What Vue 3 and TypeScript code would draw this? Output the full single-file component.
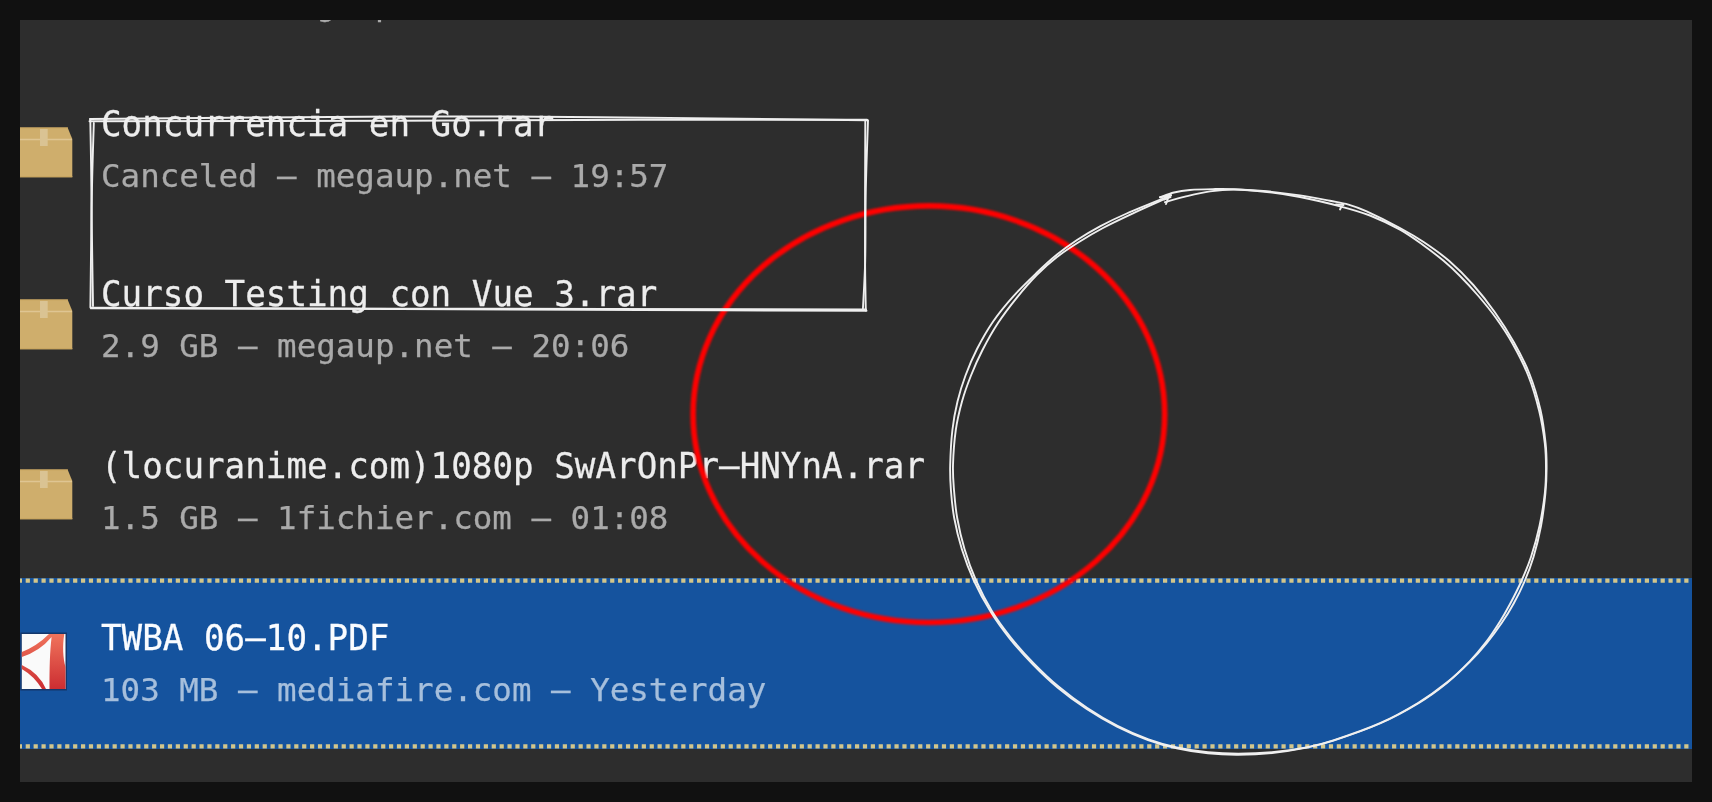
<script setup lang="ts">
type Point = [number, number]

interface Download {
  name: string
  detail: string
  kind: 'archive' | 'pdf'
  cls: string
}

const downloads: Download[] = [
  { name: '', detail: '2.9 GB — megaup.net', kind: 'archive', cls: 'clipped' },
  { name: 'Concurrencia en Go.rar', detail: 'Canceled — megaup.net — 19:57', kind: 'archive', cls: 'first' },
  { name: 'Curso Testing con Vue 3.rar', detail: '2.9 GB — megaup.net — 20:06', kind: 'archive', cls: 'second' },
  { name: '(locuranime.com)1080p SwArOnPr–HNYnA.rar', detail: '1.5 GB — 1fichier.com — 01:08', kind: 'archive', cls: 'third' },
  { name: 'TWBA 06–10.PDF', detail: '103 MB — mediafire.com — Yesterday', kind: 'pdf', cls: 'selected' },
]

// Smooth path through the given points (Catmull-Rom converted to Béziers).
function smooth(pts: Point[]): string {
  let d = `M${pts[0][0]} ${pts[0][1]}`
  for (let i = 0; i < pts.length - 1; i++) {
    const p0 = pts[Math.max(i - 1, 0)]
    const p1 = pts[i]
    const p2 = pts[i + 1]
    const p3 = pts[Math.min(i + 2, pts.length - 1)]
    const c1 = [p1[0] + (p2[0] - p0[0]) / 6, p1[1] + (p2[1] - p0[1]) / 6]
    const c2 = [p2[0] - (p3[0] - p1[0]) / 6, p2[1] - (p3[1] - p1[1]) / 6]
    d += `C${c1[0].toFixed(2)} ${c1[1].toFixed(2)} ${c2[0].toFixed(2)} ${c2[1].toFixed(2)} ${p2[0]} ${p2[1]}`
  }
  return d
}

const strokes: string[] = [
  // box
  smooth([[90, 119], [400, 116.5], [600, 117.2], [867.5, 120.3]]),
  smooth([[89.5, 121.3], [400, 120.8], [640, 119.8], [867, 119.8]]),
  smooth([[865.3, 120], [865, 250], [865.8, 310.5]]),
  smooth([[868, 120.5], [865.8, 190], [865.2, 260], [862.9, 309.5]]),
  smooth([[91, 308.4], [400, 309], [640, 310], [866.5, 310.8]]),
  smooth([[91, 307.8], [400, 308.6], [866, 309.4]]),
  smooth([[90.3, 119], [91.4, 200], [90.4, 307.5]]),
  smooth([[93.8, 123], [91.8, 205], [93, 306]]),
  // circle, outer pass
  smooth([
    [1160, 197.3], [1174, 192.5], [1190, 190], [1213, 189.1], [1233, 189.2], [1267, 191.3],
    [1300, 195.4], [1330, 200.8], [1348.5, 204.6], [1366.7, 211.4], [1400, 228],
    [1424, 242.3], [1449, 260.8], [1473.3, 285], [1495, 312.5], [1514, 342.5], [1529.5, 374],
    [1540.5, 410], [1545.6, 443.3], [1546.6, 468], [1545.4, 493.3], [1541, 526],
    [1533.5, 557], [1524.3, 582], [1513.7, 603.5], [1502, 622.5], [1486.9, 642.8],
    [1470, 661.7], [1446.9, 683], [1418.5, 703.2], [1380, 723.5], [1333.5, 740.6],
    [1306.7, 747.6], [1272, 753], [1238.3, 754.8], [1208, 753.4], [1176.7, 748.3],
    [1148, 740], [1117, 726.6], [1086.7, 709], [1057.5, 687.4], [1033, 664.5],
    [1010, 638.8], [991, 612.3], [973.8, 580.5], [961.8, 549], [954.2, 518],
    [950.9, 490], [950.2, 465], [952.4, 430], [957.5, 401.5], [965.5, 375.5], [977, 349],
    [993.3, 321.2], [1013.3, 296.3], [1036.7, 272.8], [1056.7, 254.8], [1077, 240],
    [1100, 226.3], [1126.7, 213.5], [1171, 195.3],
  ]),
  // circle, inner pass
  smooth([
    [1165, 202.2], [1185, 196.7], [1210, 191.4], [1235, 189.5], [1267, 192], [1300, 197],
    [1340, 206.3], [1370, 215.5], [1400, 229.7], [1423, 245],
    [1443.3, 260.6], [1460, 276], [1478, 295.5], [1496, 318], [1512.5, 343.5], [1528.2, 375.5],
    [1539.2, 411], [1544.8, 443.3], [1546, 468], [1544.8, 493.3], [1539.5, 526],
    [1531, 557], [1521, 582], [1510.3, 603.5], [1500, 621.5], [1486, 642.2],
    [1469.7, 661.3], [1446.5, 682.8], [1418, 703], [1380, 723.2], [1333.3, 740.4],
    [1306.5, 747.4], [1272, 752.3], [1238.3, 753.8], [1208, 752.3], [1176.8, 747.4],
    [1148.5, 739.3], [1117.5, 725.8], [1087.3, 708], [1058.5, 686.5], [1034, 663.6],
    [1011, 637.8], [992.3, 611.8], [975.8, 580], [964.5, 549], [957.2, 518], [954, 490],
    [953, 465], [955.8, 430], [962, 401.5], [971, 375.5], [982.5, 350], [998, 323],
    [1016.7, 297.8], [1036.7, 275], [1057, 257], [1079, 242], [1103, 228],
    [1133, 213.4], [1166, 198.5],
  ]),
  // pen lifts
  'M1160 197.3L1171 195.3L1164 199.5L1170.5 197M1168 198.5L1166 204',
  'M1336 204.5L1343.5 205M1342.5 204.5L1340 209.5',
]
</script>

<template>
  <main class="stage">
    <section class="shot">
      <div class="list">
        <article v-for="(item, i) in downloads" :key="i" class="row" :class="item.cls">
          <div class="icon">
            <svg v-if="item.kind === 'archive'" width="53" height="51" viewBox="0 0 53 51">
              <path d="M-2 .6H47.6L52.3 12V50.3H-2Z" fill="#cfae6c" />
              <path d="M-2 1H48" stroke="#c9a661" stroke-width="1.2" />
              <path d="M-2 49.7H52.3" stroke="#c9a661" stroke-width="1.2" />
              <path d="M-2 12.4H52" stroke="#dfc592" stroke-width="1.5" />
              <path d="M20 2H27.7V19H20Z" fill="#dac393" />
            </svg>
            <svg v-else width="48" height="60" viewBox="0 0 48 60">
              <defs>
                <linearGradient id="pdfRed" gradientUnits="userSpaceOnUse" x1="0" y1="2" x2="0" y2="58">
                  <stop offset="0" stop-color="#f0745c" />
                  <stop offset="1" stop-color="#cb2c31" />
                </linearGradient>
              </defs>
              <path d="M.3 .6H47V58.4H.3Z" fill="#14376b" />
              <path d="M1.8 2H45.5V57H1.8Z" fill="#fafafa" />
              <path d="M29.5 57C29.5 35 29.8 20 31.6 5Q20 19 1.8 25V20Q17 14 29 2H44.3C42.3 14 43 26 45.5 35V57Z" fill="url(#pdfRed)" />
              <path d="M1.8 33Q19 41 26 57H22Q14 44 1.8 37Z" fill="url(#pdfRed)" />
            </svg>
          </div>
          <div class="text">
            <div v-if="item.name" class="name">{{ item.name }}</div>
            <div class="detail">{{ item.detail }}</div>
          </div>
          <svg v-if="item.cls === 'selected'" class="dots" width="1672" height="171">
            <path d="M-2.2 2.6H1672M-2.2 168.3H1672" />
          </svg>
        </article>
      </div>
    </section>
    <svg class="marks" width="1712" height="802" viewBox="0 0 1712 802">
      <ellipse class="red" cx="928.9" cy="414.2" rx="235.8" ry="208.3" />
      <path v-for="(d, i) in strokes" :key="i" class="pen" :d="d" />
    </svg>
  </main>
</template>

<style>
html,
body {
  margin: 0;
  background: #111;
}
</style>

<style scoped>
.stage {
  position: relative;
  box-sizing: border-box;
  width: 1712px;
  height: 802px;
  padding: 20px;
  background: #111;
  overflow: hidden;
}
.shot {
  height: 762px;
  background: #2d2d2d;
  overflow: hidden;
}
.list {
  margin-top: -126px;
  display: flex;
  flex-direction: column;
  font-family: "DejaVu Sans Mono", monospace;
}
.row {
  position: relative;
  box-sizing: border-box;
  height: 171px;
  flex: none;
  display: flex;
}
.icon {
  width: 53px;
  flex: none;
  padding-top: 62px;
}
.icon svg {
  display: block;
  filter: blur(0.5px);
}
.text {
  padding: 33px 0 0 28px;
  white-space: pre;
  filter: blur(0.55px);
}
.name,
.detail {
  height: 52px;
  line-height: 52px;
  transform-origin: 0 38px;
}
.name {
  font-size: 34.22px;
  color: #ededed;
  transform: scaleY(1.03);
  -webkit-text-stroke: 0.25px currentColor;
}
.detail {
  font-size: 32.5px;
  color: #aaa;
  -webkit-text-stroke: 0.25px currentColor;
}
.clipped .text {
  padding-top: 84px;
}
.second .text {
  padding-top: 32px;
}
.second .icon {
  padding-top: 63px;
}
.selected {
  background: #15539e;
}
.selected .icon {
  padding-top: 54px;
}
.selected .text {
  padding-top: 34px;
}
.selected .name {
  color: #fafcff;
}
.selected .detail {
  color: #a6bfdc;
}
.dots {
  position: absolute;
  left: 0;
  top: 0;
  filter: blur(0.5px);
}
.dots path {
  stroke: #d3c68b;
  stroke-width: 4.2;
  stroke-dasharray: 4.2 3.698;
}
.marks {
  position: absolute;
  left: 0;
  top: 0;
}
.red {
  fill: none;
  stroke: #f00;
  stroke-width: 5.6;
  filter: blur(0.8px);
}
.pen {
  fill: none;
  stroke: #efefef;
  stroke-width: 1.9;
  stroke-linecap: round;
  stroke-linejoin: round;
}
</style>
